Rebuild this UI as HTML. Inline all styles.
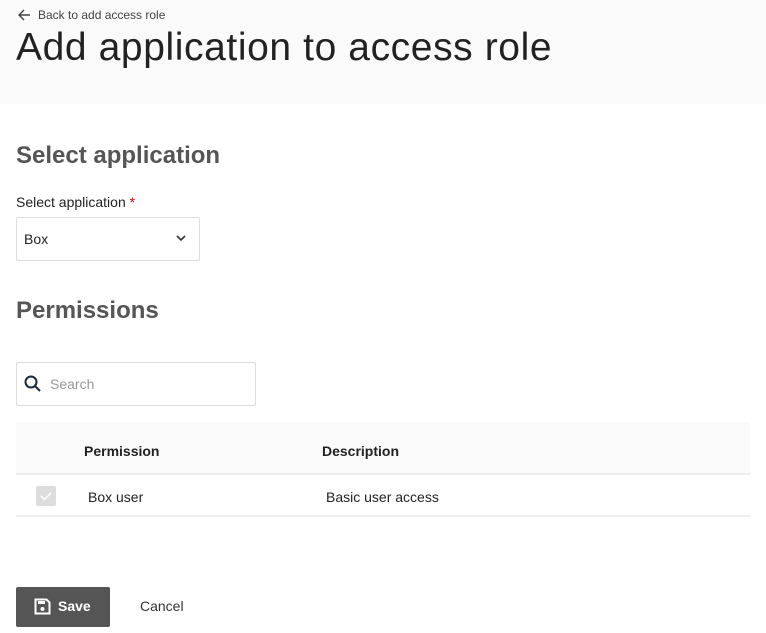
<!DOCTYPE html>
<html><head><style>
body{margin:0;width:766px;height:633px;background:#fff;font-family:"Liberation Sans",sans-serif;color:#222;position:relative;overflow:hidden}
.hdr{position:absolute;left:0;top:0;width:766px;height:104px;background:#fafafa}
.abs{position:absolute;white-space:nowrap}
</style></head><body>
<div class="hdr"></div>
<svg class="abs" style="left:17px;top:8px" width="14" height="14" viewBox="0 0 14 14"><path d="M13 7H2M7 2L2 7l5 5" fill="none" stroke="#444" stroke-width="1.4"/></svg>
<div class="abs" style="left:38px;top:8px;font-size:12px;color:#444">Back to add access role</div>
<div class="abs" style="left:16px;top:26px;font-size:39px;letter-spacing:0.6px;color:#222">Add application to access role</div>
<div class="abs" style="left:16px;top:142px;font-size:24px;font-weight:bold;color:#555">Select application</div>
<div class="abs" style="left:16px;top:194px;font-size:14px;color:#222">Select application <span style="color:#d00">*</span></div>
<div class="abs" style="left:16px;top:217px;width:182px;height:42px;border:1px solid #ddd;border-radius:2px"></div>
<div class="abs" style="left:24px;top:231px;font-size:14px;color:#222">Box</div>
<svg class="abs" style="left:175px;top:234px" width="12" height="8" viewBox="0 0 12 8"><path d="M2 2l4 4 4-4" fill="none" stroke="#333" stroke-width="1.6"/></svg>
<div class="abs" style="left:16px;top:297px;font-size:24px;font-weight:bold;color:#555">Permissions</div>
<div class="abs" style="left:16px;top:362px;width:238px;height:42px;border:1px solid #ddd;border-radius:2px"></div>
<svg class="abs" style="left:24px;top:375px" width="18" height="18" viewBox="0 0 18 18"><circle cx="7" cy="7" r="5.5" fill="none" stroke="#1a2a3a" stroke-width="2"/><path d="M11 11l5 5" stroke="#1a2a3a" stroke-width="2"/></svg>
<div class="abs" style="left:50px;top:376px;font-size:14px;color:#999">Search</div>
<div class="abs" style="left:16px;top:422px;width:734px;height:51px;background:#fafafa;border-bottom:2px solid #eee"></div>
<div class="abs" style="left:84px;top:443px;font-size:14px;font-weight:bold">Permission</div>
<div class="abs" style="left:322px;top:443px;font-size:14px;font-weight:bold">Description</div>
<div class="abs" style="left:36px;top:486px;width:20px;height:20px;background:#ddd;border-radius:2px"></div>
<svg class="abs" style="left:38px;top:488px" width="16" height="16" viewBox="0 0 16 16"><path d="M3 8l3.5 3.5L13 5" fill="none" stroke="#fff" stroke-width="1.4"/></svg>
<div class="abs" style="left:88px;top:489px;font-size:14px">Box user</div>
<div class="abs" style="left:326px;top:489px;font-size:14px">Basic user access</div>
<div class="abs" style="left:16px;top:515px;width:734px;height:2px;background:#eee"></div>
<div class="abs" style="left:16px;top:587px;width:94px;height:40px;background:#555;border-radius:2px"></div>
<svg class="abs" style="left:34px;top:598px" width="17" height="17" viewBox="0 0 17 17"><path d="M1.5 1.5h11l3 3v11h-14z" fill="none" stroke="#fff" stroke-width="2"/><rect x="4" y="3" width="7" height="3" fill="#fff"/><circle cx="8.5" cy="11" r="2" fill="#fff"/></svg>
<div class="abs" style="left:58px;top:598px;font-size:14px;font-weight:bold;color:#fff">Save</div>
<div class="abs" style="left:140px;top:598px;font-size:14px;color:#333">Cancel</div>
</body></html>
